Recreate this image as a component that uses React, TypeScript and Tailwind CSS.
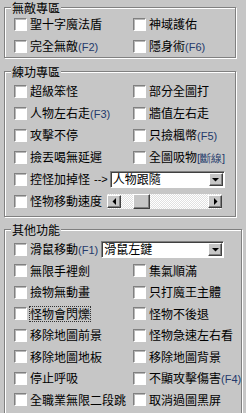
import React from 'react';

const FONT = { fontFamily: '"Noto Sans CJK TC", "Noto Sans CJK SC", sans-serif' };

const Box: React.FC = () => (
  <span className="w-[13px] h-[13px] shrink-0 bg-white border-t border-l border-[#808080] border-b border-r border-b-white border-r-white shadow-[inset_1px_1px_0_#b8b8b8]" />
);

const Check: React.FC<{ label: string; suffix?: string; focus?: boolean }> = ({ label, suffix, focus }) => (
  <div className="flex items-center gap-[3px] whitespace-nowrap">
    <Box />
    <span className={`leading-[14px] ${focus ? 'outline outline-1 outline-dotted outline-[#333] outline-offset-0' : ''}`}>
      {label}
      {suffix && <span className="text-[11px] text-[#243a6b]" style={{ fontFamily: '"Liberation Sans", sans-serif' }}>{suffix}</span>}
    </span>
  </div>
);

const Row: React.FC<{ children: React.ReactNode; h?: string }> = ({ children, h = 'h-[22px]' }) => (
  <div className={`grid grid-cols-[119px_1fr] items-center overflow-visible ${h}`}>{children}</div>
);

const Group: React.FC<{ title: string; children: React.ReactNode; className?: string }> = ({ title, children, className = '' }) => (
  <fieldset className={`ml-[4px] w-[232px] pl-[9px] border border-[#808080] shadow-[inset_1px_1px_0_#fff,1px_1px_0_#fff] ${className}`}>
    <legend className="ml-[-3px] px-[1px] h-[15px] leading-[15px] bg-[#c6c6c6]">{title}</legend>
    {children}
  </fieldset>
);

const Arrow: React.FC<{ dir: 'down' | 'left' | 'right' }> = ({ dir }) => (
  <span className="w-[14px] h-[13px] shrink-0 bg-[#c6c6c6] border-t border-l border-white border-b border-r border-b-[#404040] border-r-[#404040] shadow-[inset_-1px_-1px_0_#808080] flex items-center justify-center">
    <svg width="7" height="7" viewBox="0 0 7 7">
      {dir === 'down' && <path d="M0 2h7L3.5 5.5z" fill="#000" />}
      {dir === 'left' && <path d="M5 0v7L1.5 3.5z" fill="#000" />}
      {dir === 'right' && <path d="M2 0v7l3.5-3.5z" fill="#000" />}
    </svg>
  </span>
);

const Select: React.FC<{ value: string; className?: string }> = ({ value, className = '' }) => (
  <div className={`h-[17px] bg-white border-t border-l border-[#808080] border-b border-r border-b-white border-r-white shadow-[inset_1px_1px_0_#404040] flex items-center justify-between pl-[2px] pr-[1px] ${className}`}>
    <span className="leading-[14px]">{value}</span>
    <Arrow dir="down" />
  </div>
);

const Slider: React.FC = () => (
  <div className="w-[115px] h-[15px] flex items-center bg-[repeating-conic-gradient(#ffffff_0_25%,#e0e0e0_0_50%)] bg-[length:2px_2px]">
    <Arrow dir="left" />
    <span className="ml-[12px] w-[17px] h-[15px] bg-[#c6c6c6] border-t border-l border-white border-b border-r border-b-[#404040] border-r-[#404040] shadow-[inset_-1px_-1px_0_#808080]" />
    <span className="flex-1" />
    <Arrow dir="right" />
  </div>
);

export default function App() {
  return (
    <div className="w-[246px] h-[413px] bg-[#c6c6c6] text-[12px] text-black overflow-hidden" style={FONT}>
      <Group title="無敵專區">
        <div className="-mt-[2px]">
          <Row><Check label="聖十字魔法盾" /><Check label="神域護佑" /></Row>
          <Row><Check label="完全無敵" suffix="(F2)" /><Check label="隱身術" suffix="(F6)" /></Row>
        </div>
      </Group>

      <Group title="練功專區" className="mt-[6px] pb-[4px]">
        <div className="mt-[1px]">
          <Row><Check label="超級笨怪" /><Check label="部分全圖打" /></Row>
          <Row><Check label="人物左右走" suffix="(F3)" /><Check label="牆值左右走" /></Row>
          <Row><Check label="攻擊不停" /><Check label="只撿楓幣" suffix="(F5)" /></Row>
          <Row><Check label="撿丟喝無延遲" /><Check label="全圖吸物" suffix="[斷線]" /></Row>
          <div className="h-[22px] flex items-center">
            <Check label="控怪加掉怪" />
            <span className="ml-[4px] mr-[2px] leading-[14px] text-[11px]" style={{ fontFamily: '"Liberation Sans", sans-serif' }}>--&gt;</span>
            <Select value="人物跟隨" className="w-[115px]" />
          </div>
          <div className="h-[22px] flex items-center">
            <Check label="怪物移動速度" />
            <span className="ml-[5px]"><Slider /></span>
          </div>
        </div>
      </Group>

      <Group title="其他功能" className="mt-[5px] pb-[2px]">
        <div className="mt-[1px]">
          <div className="h-[22px] flex items-center">
            <Check label="滑鼠移動" suffix="(F1)" />
            <Select value="滑鼠左鍵" className="ml-[3px] w-[123px]" />
          </div>
          <Row h="h-[21.5px]"><Check label="無限手裡劍" /><Check label="集氣順滿" /></Row>
          <Row h="h-[21.5px]"><Check label="撿物無動畫" /><Check label="只打魔王主體" /></Row>
          <Row h="h-[21.5px]"><Check label="怪物會閃爍" focus /><Check label="怪物不後退" /></Row>
          <Row h="h-[21.5px]"><Check label="移除地圖前景" /><Check label="怪物急速左右看" /></Row>
          <Row h="h-[21.5px]"><Check label="移除地圖地板" /><Check label="移除地圖背景" /></Row>
          <Row h="h-[21.5px]"><Check label="停止呼吸" /><Check label="不顯攻擊傷害" suffix="(F4)" /></Row>
          <Row h="h-[21.5px]"><Check label="全職業無限二段跳" /><Check label="取消過圖黑屏" /></Row>
        </div>
      </Group>
    </div>
  );
}
